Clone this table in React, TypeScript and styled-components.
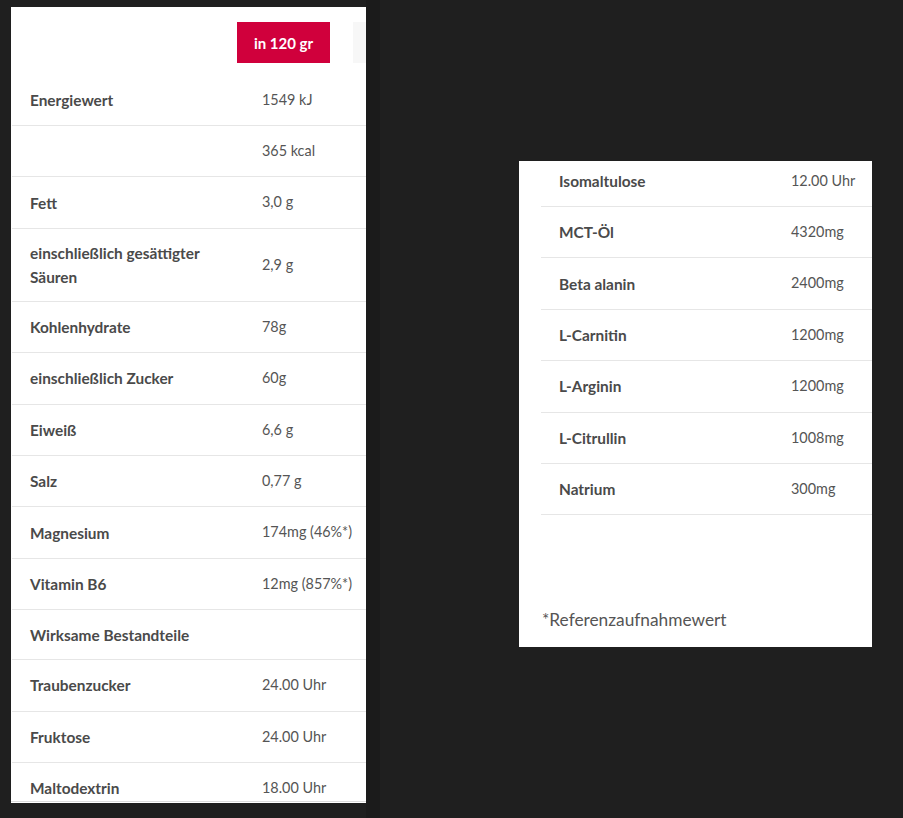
import React from "react";
import styled, { createGlobalStyle } from "styled-components";

const Global = createGlobalStyle`
  html, body { margin: 0; padding: 0; background: #1f1f1f; }
  body { font-family: "Source Sans Pro", Lato, "Noto Sans", sans-serif; }
`;

const Page = styled.div`
  display: flex;
  align-items: flex-start;
  width: 903px;
  height: 818px;
  overflow: hidden;
  background: #1f1f1f;
`;

const ShadowStrip = styled.div`
  width: 14px;
  height: 818px;
  background: #1b1b1b;
  flex: none;
`;

const LeftPanel = styled.div`
  margin: 7px 0 0 11px;
  width: 355px;
  height: 796px;
  background: #fff;
  flex: none;
  overflow: hidden;
`;

const Scroller = styled.div`
  height: 794px;
  overflow: hidden;
  border-bottom: 1px solid #dcdcdc;
  padding-left: 1px;
`;

const HeaderRow = styled.div`
  display: flex;
  gap: 23px;
  padding: 15px 0 11.6px 225px;
  width: 400px;
`;

const Tab = styled.div<{ $active?: boolean }>`
  flex: none;
  width: 93px;
  height: 41px;
  display: flex;
  align-items: center;
  justify-content: center;
  background: ${(p) => (p.$active ? "#d0003c" : "#f7f7f7")};
  color: ${(p) => (p.$active ? "#fff" : "#555")};
  font-size: 15px;
  font-weight: 700;
`;

const Table = styled.div<{ $width: number }>`
  width: ${(p) => p.$width}px;
`;

const Row = styled.div`
  display: grid;
  grid-template-columns: 232px 1fr;
  align-items: center;
  border-bottom: 1px solid #e6e6e6;
`;

const Label = styled.div`
  padding: 12px 18px;
  min-height: 24px;
  font-size: 15.4px;
  line-height: 24px;
  font-weight: 700;
  color: #4a4a4a;
`;

const Value = styled.div`
  padding: 12px 18px;
  min-height: 25px;
  font-size: 14.4px;
  line-height: 26.4px;
  font-weight: 400;
  color: #555;
  white-space: nowrap;
`;

const Gap = styled.div`
  width: 139px;
  flex: none;
`;

const RightPanel = styled.div`
  margin-top: 161px;
  width: 353px;
  height: 486px;
  background: #fff;
  overflow: hidden;
  flex: none;
  display: flex;
  flex-direction: column;
`;

const RightInner = styled.div`
  padding-left: 22px;
  margin-top: -5.4px;
`;

const Footnote = styled.div`
  margin-top: 92px;
  padding-left: 23px;
  font-size: 17.3px;
  line-height: 26px;
  color: #555;
`;

type Item = [string, string];

const leftRows: Item[] = [
  ["Energiewert", "1549 kJ"],
  ["", "365 kcal"],
  ["Fett", "3,0 g"],
  ["einschließlich gesättigter Säuren", "2,9 g"],
  ["Kohlenhydrate", "78g"],
  ["einschließlich Zucker", "60g"],
  ["Eiweiß", "6,6 g"],
  ["Salz", "0,77 g"],
  ["Magnesium", "174mg (46%*)"],
  ["Vitamin B6", "12mg (857%*)"],
  ["Wirksame Bestandteile", ""],
  ["Traubenzucker", "24.00 Uhr"],
  ["Fruktose", "24.00 Uhr"],
  ["Maltodextrin", "18.00 Uhr"],
];

const rightRows: Item[] = [
  ["Isomaltulose", "12.00 Uhr"],
  ["MCT-Öl", "4320mg"],
  ["Beta alanin", "2400mg"],
  ["L-Carnitin", "1200mg"],
  ["L-Arginin", "1200mg"],
  ["L-Citrullin", "1008mg"],
  ["Natrium", "300mg"],
];

const Rows = ({ items }: { items: Item[] }) => (
  <>
    {items.map(([l, v], i) => (
      <Row key={i}>
        <Label>{l}</Label>
        <Value>{v}</Value>
      </Row>
    ))}
  </>
);

export default function App() {
  return (
    <>
      <Global />
      <Page>
        <LeftPanel>
          <Scroller>
            <HeaderRow>
              <Tab $active>in 120 gr</Tab>
              <Tab />
            </HeaderRow>
            <Table $width={380}>
              <Rows items={leftRows} />
            </Table>
          </Scroller>
        </LeftPanel>
        <ShadowStrip />
        <Gap />
        <RightPanel>
          <RightInner>
            <Table $width={380}>
              <Rows items={rightRows} />
            </Table>
          </RightInner>
          <Footnote>*Referenzaufnahmewert</Footnote>
        </RightPanel>
      </Page>
    </>
  );
}
